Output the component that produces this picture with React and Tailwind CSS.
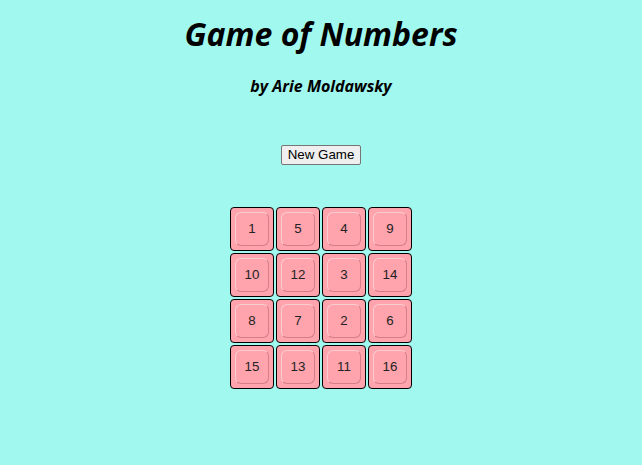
import React, { useState } from 'react';

const start = [1, 5, 4, 9, 10, 12, 3, 14, 8, 7, 2, 6, 15, 13, 11, 16];

const App = () => {
  const [tiles, setTiles] = useState(start);

  const shuffle = () => {
    const next = [...tiles];
    for (let i = next.length - 1; i > 0; i--) {
      const j = Math.floor(Math.random() * (i + 1));
      [next[i], next[j]] = [next[j], next[i]];
    }
    setTiles(next);
  };

  return (
    <div className="min-h-[465px] w-full bg-[#a0f8ef] flex flex-col items-center text-black">
      <h1
        className="mt-[14px] text-[32px] leading-[40px] font-bold italic"
        style={{ fontFamily: '"Open Sans", "DejaVu Sans", sans-serif' }}
      >
        Game of Numbers
      </h1>
      <h4
        className="mt-[22px] text-[16px] leading-[20px] font-bold italic"
        style={{ fontFamily: '"Open Sans", "DejaVu Sans", sans-serif' }}
      >
        by Arie Moldawsky
      </h4>
      <button
        onClick={shuffle}
        className="mt-[49px] h-[20px] px-[6px] bg-[#efefef] border border-[#767676] rounded-[2px] text-[13.33px] leading-[16px] font-['Liberation_Sans',Arial,sans-serif]"
      >
        New Game
      </button>
      <div className="mt-[42px] grid grid-cols-4 gap-[2px]">
        {tiles.map((n) => (
          <div
            key={n}
            className="w-[44px] h-[44px] bg-[#ffa3ad] border border-black rounded-[4px] flex items-center justify-center"
          >
            <div className="w-[34px] h-[34px] rounded-[6px] border border-t-[#f7cdd2] border-l-[#f7cdd2] border-r-[#d47f88] border-b-[#d47f88] flex items-center justify-center text-[13.33px] text-[#222] font-['Liberation_Sans',Arial,sans-serif]">
              {n}
            </div>
          </div>
        ))}
      </div>
    </div>
  );
};

export default App;
